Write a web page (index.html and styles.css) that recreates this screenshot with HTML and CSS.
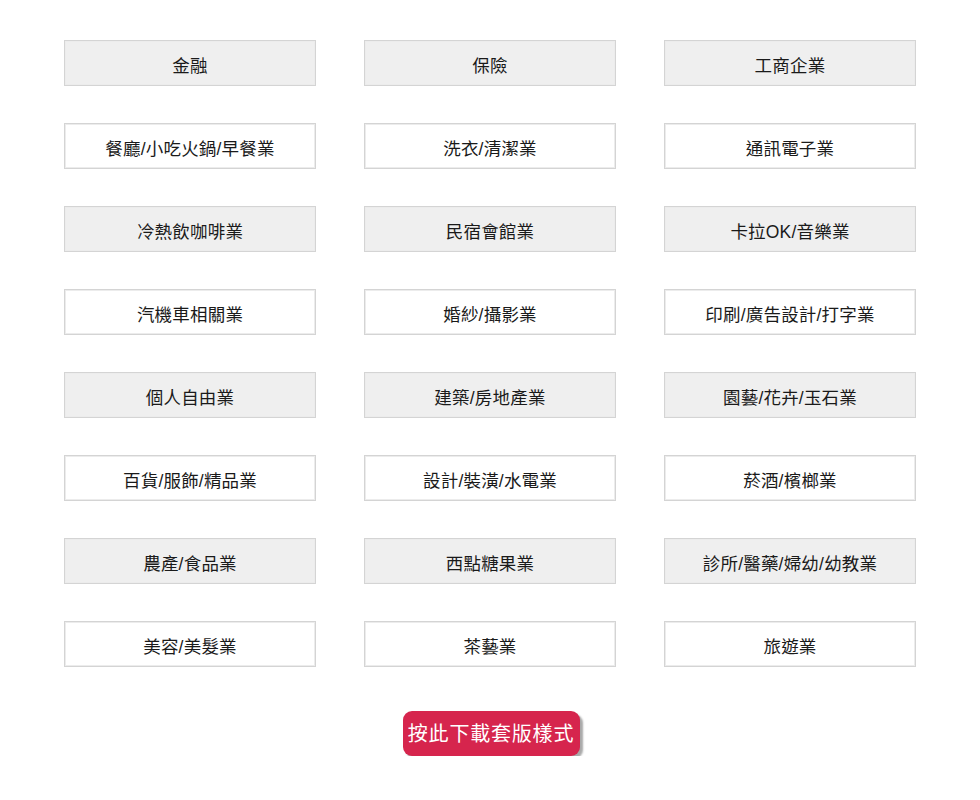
FILE: index.html
```html
<!DOCTYPE html>
<html lang="zh-Hant">
<head>
    <meta charset="UTF-8">
    <meta name="viewport" content="width=device-width, initial-scale=1.0">
    <title>產業類別</title>
    <link rel="stylesheet" href="styles.css">
</head>
<body>
    <div class="container">
        <div class="category-grid">
            <div class="category shaded">金融</div>
            <div class="category shaded">保險</div>
            <div class="category shaded">工商企業</div>

            <div class="category">餐廳/小吃火鍋/早餐業</div>
            <div class="category">洗衣/清潔業</div>
            <div class="category">通訊電子業</div>

            <div class="category shaded">冷熱飲咖啡業</div>
            <div class="category shaded">民宿會館業</div>
            <div class="category shaded">卡拉OK/音樂業</div>

            <div class="category">汽機車相關業</div>
            <div class="category">婚紗/攝影業</div>
            <div class="category">印刷/廣告設計/打字業</div>

            <div class="category shaded">個人自由業</div>
            <div class="category shaded">建築/房地產業</div>
            <div class="category shaded">園藝/花卉/玉石業</div>

            <div class="category">百貨/服飾/精品業</div>
            <div class="category">設計/裝潢/水電業</div>
            <div class="category">菸酒/檳榔業</div>

            <div class="category shaded">農產/食品業</div>
            <div class="category shaded">西點糖果業</div>
            <div class="category shaded">診所/醫藥/婦幼/幼教業</div>

            <div class="category">美容/美髮業</div>
            <div class="category">茶藝業</div>
            <div class="category">旅遊業</div>
        </div>

        <div class="download">
            <a href="#" class="download-btn">按此下載套版樣式</a>
        </div>
    </div>
</body>
</html>
```

FILE: styles.css
```css
body {
    margin: 0;
    background: #fff;
    font-family: "Liberation Sans", "Noto Sans CJK TC", sans-serif;
    color: #1a1a1a;
}

.container {
    width: 852px;
    margin: 0 0 0 64px;
    padding-top: 40px;
}

.category-grid {
    display: grid;
    grid-template-columns: repeat(3, 252px);
    column-gap: 48px;
    row-gap: 37px;
}

.category {
    height: 46px;
    box-sizing: border-box;
    padding-top: 5px;
    border: 1px solid #d4d4d4;
    box-shadow: inset 0 0 0 1px #ececec;
    background: #fff;
    display: flex;
    align-items: center;
    justify-content: center;
    font-size: 17.5px;
    line-height: 20px;
    letter-spacing: 0.2px;
}

.category.shaded {
    background: #efefef;
}

.download {
    display: flex;
    justify-content: center;
    padding: 44px 0 0 2px;
}

.download-btn {
    display: block;
    width: 177px;
    height: 45px;
    box-sizing: border-box;
    padding-top: 1px;
    border-radius: 9px;
    background: #d6254d;
    color: #fff;
    text-decoration: none;
    font-size: 20px;
    line-height: 44px;
    text-align: center;
    letter-spacing: 0.8px;
    box-shadow: 3px 3px 2px #a9a9a9;
}
```
